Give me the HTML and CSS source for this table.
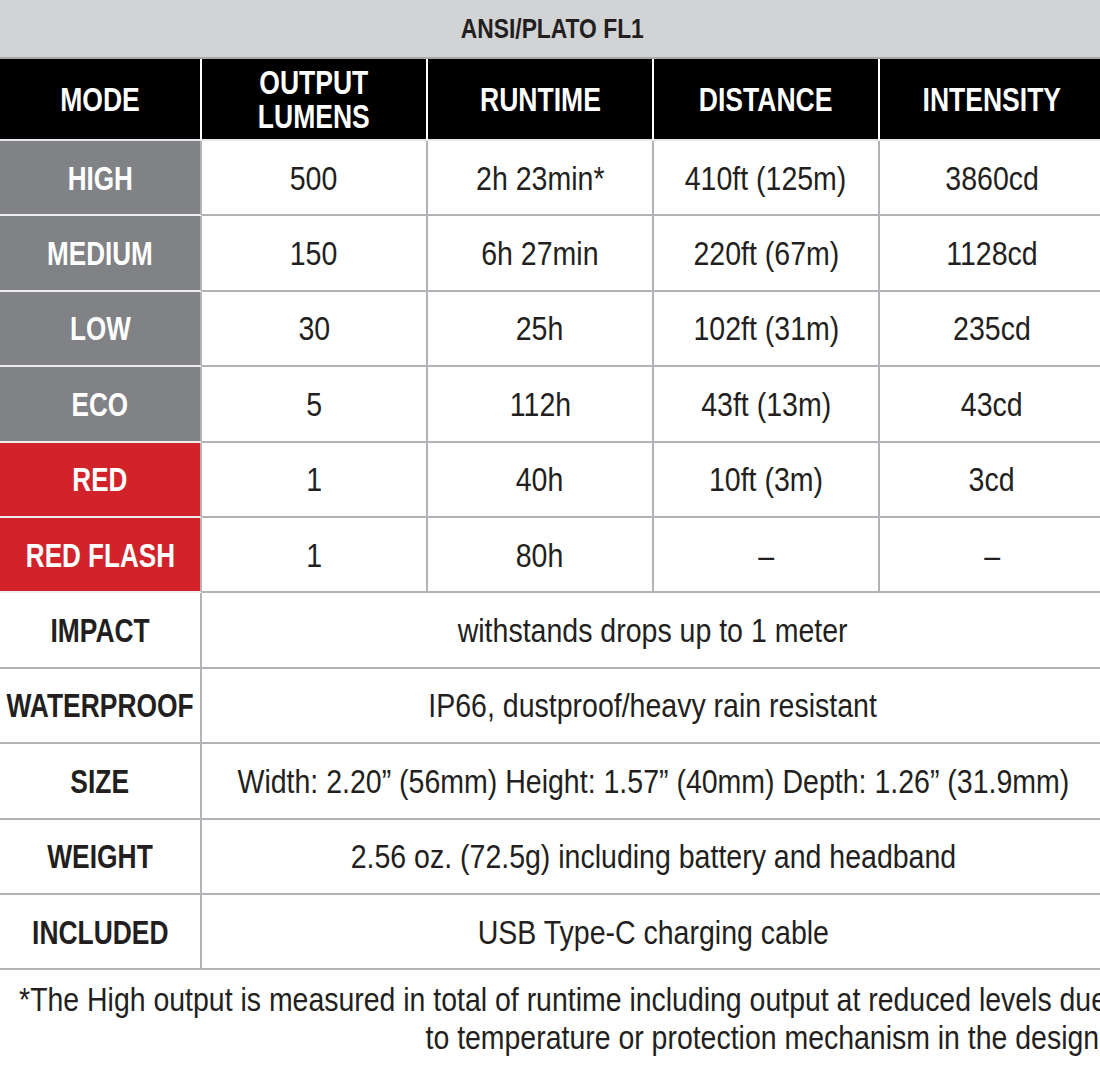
FILE: index.html
```html
<!DOCTYPE html>
<html>
<head>
<meta charset="utf-8">
<link rel="stylesheet" href="styles.css">
</head>
<body>
<div class="sheet">
  <div class="spec">
    <div class="title"><span class="t">ANSI/PLATO FL1</span></div>

    <div class="cell hd"><span class="t">MODE</span></div>
    <div class="cell hd"><span class="t">OUTPUT<br>LUMENS</span></div>
    <div class="cell hd"><span class="t">RUNTIME</span></div>
    <div class="cell hd"><span class="t">DISTANCE</span></div>
    <div class="cell hd last"><span class="t">INTENSITY</span></div>

    <div class="cell mode gray"><span class="t">HIGH</span></div>
    <div class="cell"><span class="t">500</span></div>
    <div class="cell"><span class="t">2h 23min*</span></div>
    <div class="cell"><span class="t">410ft (125m)</span></div>
    <div class="cell last"><span class="t">3860cd</span></div>

    <div class="cell mode gray"><span class="t">MEDIUM</span></div>
    <div class="cell"><span class="t">150</span></div>
    <div class="cell"><span class="t">6h 27min</span></div>
    <div class="cell"><span class="t">220ft (67m)</span></div>
    <div class="cell last"><span class="t">1128cd</span></div>

    <div class="cell mode gray"><span class="t">LOW</span></div>
    <div class="cell"><span class="t">30</span></div>
    <div class="cell"><span class="t">25h</span></div>
    <div class="cell"><span class="t">102ft (31m)</span></div>
    <div class="cell last"><span class="t">235cd</span></div>

    <div class="cell mode gray"><span class="t">ECO</span></div>
    <div class="cell"><span class="t">5</span></div>
    <div class="cell"><span class="t">112h</span></div>
    <div class="cell"><span class="t">43ft (13m)</span></div>
    <div class="cell last"><span class="t">43cd</span></div>

    <div class="cell mode red"><span class="t">RED</span></div>
    <div class="cell"><span class="t">1</span></div>
    <div class="cell"><span class="t">40h</span></div>
    <div class="cell"><span class="t">10ft (3m)</span></div>
    <div class="cell last"><span class="t">3cd</span></div>

    <div class="cell mode red"><span class="t">RED FLASH</span></div>
    <div class="cell"><span class="t">1</span></div>
    <div class="cell"><span class="t">80h</span></div>
    <div class="cell"><span class="t">–</span></div>
    <div class="cell last"><span class="t">–</span></div>

    <div class="cell label"><span class="t">IMPACT</span></div>
    <div class="cell wide"><span class="t">withstands drops up to 1 meter</span></div>

    <div class="cell label"><span class="t">WATERPROOF</span></div>
    <div class="cell wide"><span class="t">IP66, dustproof/heavy rain resistant</span></div>

    <div class="cell label"><span class="t">SIZE</span></div>
    <div class="cell wide"><span class="t">Width: 2.20” (56mm) Height: 1.57” (40mm) Depth: 1.26” (31.9mm)</span></div>

    <div class="cell label"><span class="t">WEIGHT</span></div>
    <div class="cell wide"><span class="t">2.56 oz. (72.5g) including battery and headband</span></div>

    <div class="cell label"><span class="t">INCLUDED</span></div>
    <div class="cell wide"><span class="t">USB Type-C charging cable</span></div>
  </div>
  <p class="note">*The High output is measured in total of runtime including output at reduced levels due<br>to temperature or protection mechanism in the design.</p>
</div>
</body>
</html>
```

FILE: styles.css
```css
html, body {
  margin: 0;
  padding: 0;
  overflow: hidden;
  background: #ffffff;
}

body {
  font-family: "Liberation Sans", Arial, sans-serif;
  color: #231f20;
}

.sheet {
  width: 1107px;
}

.spec {
  width: 1104px;
  display: grid;
  grid-template-columns: 202px 226px 226px 226px 224px;
  grid-template-rows: 59px 82px repeat(11, 75.4px);
}

/* condensed look: the text is narrowed horizontally */
.t {
  display: inline-block;
  white-space: nowrap;
  transform: scaleX(0.864);
  transform-origin: center center;
}

.title {
  grid-column: 1 / -1;
  background: #d1d3d4;
  border-bottom: 2px solid #a7a9ac;
  box-sizing: border-box;
  display: flex;
  align-items: center;
  justify-content: center;
  font-weight: bold;
  font-size: 28px;
  padding-top: 1px;
}

.title .t {
  transform: scaleX(0.815);
}

.cell {
  box-sizing: border-box;
  border-right: 2px solid #b1b3b6;
  border-bottom: 2px solid #b1b3b6;
  display: flex;
  align-items: center;
  justify-content: center;
  text-align: center;
  font-size: 33px;
  line-height: 34px;
  padding-top: 2px;
  background: #ffffff;
}

.cell.last {
  border-right: none;
}

.cell.wide {
  grid-column: 2 / -1;
  border-right: none;
}

.hd {
  background: #000000;
  color: #ffffff;
  font-weight: bold;
  font-size: 34px;
  line-height: 34px;
  padding-top: 0;
  border-right-color: #ffffff;
  border-bottom-color: #e6e7e8;
}

.hd .t {
  transform: scaleX(0.78);
}

.mode {
  color: #ffffff;
  font-weight: bold;
  border-bottom-color: #eeeeee;
}

.mode .t {
  transform: scaleX(0.79);
}

.mode.gray {
  background: #808285;
}

.mode.red {
  background: #d2232a;
}

.label {
  font-weight: bold;
}

.label .t {
  transform: scaleX(0.80);
}

.note {
  margin: 0 0 0 -184px;
  width: 1291px;
  padding-top: 11px;
  text-align: right;
  white-space: nowrap;
  font-size: 33px;
  line-height: 38px;
  transform: scaleX(0.862);
  transform-origin: right top;
}
```
